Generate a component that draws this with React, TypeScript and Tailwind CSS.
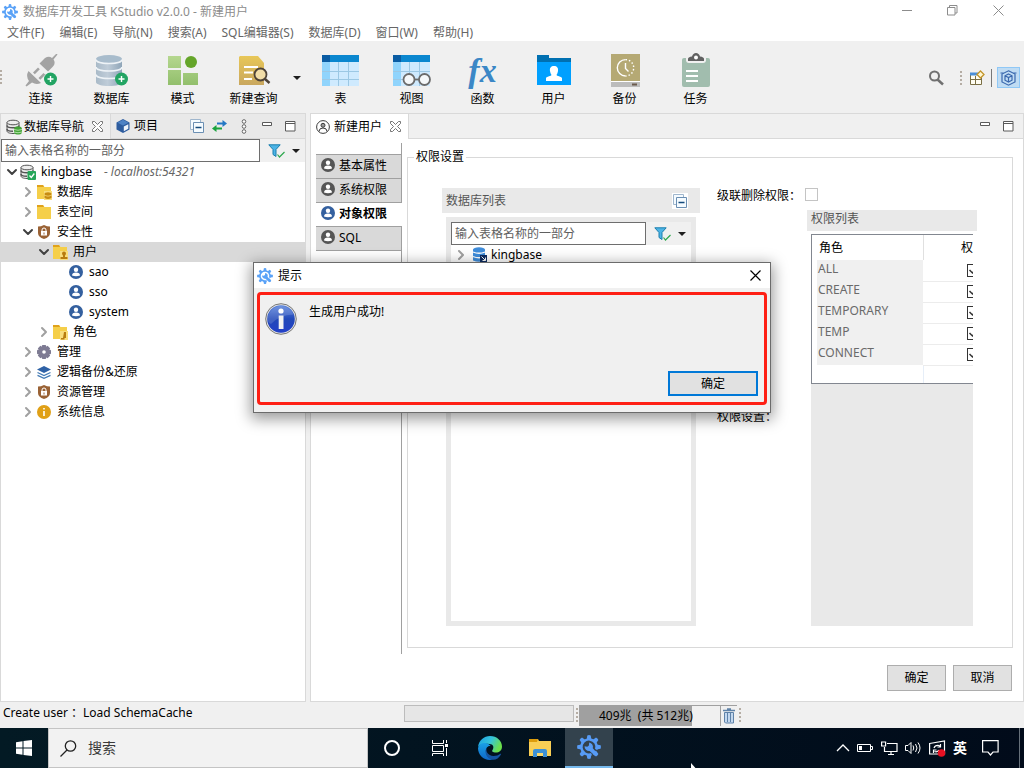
import clsx from "clsx";
import { ChevronDown, ChevronRight } from "lucide-react";
import { ReactNode } from "react";

type IconProps = { size?: number };

const menus = [
    "文件(F)",
    "编辑(E)",
    "导航(N)",
    "搜索(A)",
    "SQL编辑器(S)",
    "数据库(D)",
    "窗口(W)",
    "帮助(H)",
];

const GearIcon = ({ size = 16, color = "#5aa2f7" }: IconProps & { color?: string }) => (
    <svg width={size} height={size} viewBox="0 0 24 24" fill="none">
        {[0, 45, 90, 135, 180, 225, 270, 315].map((deg) => (
            <path
                key={deg}
                d="M9.6 4.6 10.3 0.4Q12 -0.2 13.7 0.4L14.4 4.6Z"
                fill={color}
                transform={`rotate(${deg} 12 12)`}
            />
        ))}
        <path
            d="M14.5 19.2A7.6 7.6 0 1 1 19.2 14.5"
            stroke={color}
            strokeWidth="2.4"
        />
        <path
            d="M12.2 7.4 11.9 10.6 10.3 11.8 7.6 11.2A4.5 4.5 0 0 0 12.6 16L18.3 21 20.6 18.7 15.8 13.2A4.6 4.6 0 0 0 12.2 7.4Z"
            fill={color}
        />
    </svg>
);

const PlusBadge = () => (
    <>
        <circle cx="26.5" cy="25" r="6.5" fill="#22a463" />
        <path d="M26.5 22v6M23.5 25h6" stroke="#fff" strokeWidth="1.4" />
    </>
);

const ConnectIcon = () => (
    <svg width="34" height="34" viewBox="0 0 34 34">
        <g fill="#a3a3a3">
            <path d="M15.5 9.5 21 4Q25 1.5 28 4L32.5-.5 33.5.5 29.5 5.5Q32 9 29 12.5L24 17.5Z" />
            <path d="M4.5 17 17 29Q12 31 8 28.5L2.5 32.5 1.5 31.5 5 27Q1.5 22 4.5 17Z" />
            <path d="m9 18.5 5-5 1.8 1.8-5 5zM14.5 24l5-5 1.8 1.8-5 5z" />
        </g>
        <PlusBadge />
    </svg>
);

const DatabaseIcon = () => (
    <svg width="34" height="34" viewBox="0 0 34 34">
        <defs>
            <linearGradient id="dbBody" x1="0" x2="1">
                <stop offset="0" stopColor="#a9bac8" />
                <stop offset=".45" stopColor="#bfccd8" />
                <stop offset="1" stopColor="#8fa5b8" />
            </linearGradient>
        </defs>
        <path d="M1 5v23c0 2.5 6 4 13 4s13-1.5 13-4V5Z" fill="url(#dbBody)" />
        <ellipse cx="14" cy="5" rx="13" ry="4" fill="#a8bccc" />
        <path
            d="M1 5.5c0 2.5 6 4 13 4s13-1.5 13-4M1 13c0 2.5 6 4 13 4s13-1.5 13-4M1 20.5c0 2.5 6 4 13 4s13-1.5 13-4"
            fill="none"
            stroke="#eef3f7"
            strokeWidth="1.6"
        />
        <PlusBadge />
    </svg>
);

const SchemaIcon = () => (
    <svg width="34" height="34" viewBox="0 0 34 34">
        <defs>
            <linearGradient id="leaf" x1="0" y1="0" x2="0" y2="1">
                <stop offset="0" stopColor="#b5d78f" />
                <stop offset="1" stopColor="#92bf6c" />
            </linearGradient>
        </defs>
        <path d="M2 2h13v12H2zM2 16h13v15H2zM17 19h15v12H17z" fill="url(#leaf)" />
        <circle cx="25" cy="8" r="6" fill="#65a52a" />
    </svg>
);

const QueryIcon = () => (
    <svg width="34" height="34" viewBox="0 0 34 34">
        <defs>
            <linearGradient id="sheet" x1="0" y1="0" x2="0" y2="1">
                <stop offset="0" stopColor="#e8c758" />
                <stop offset="1" stopColor="#c9a75e" />
            </linearGradient>
        </defs>
        <path d="M3 2h18l6 7v22H2V3Z" fill="url(#sheet)" />
        <path d="M7 13h14M7 18.5h9M7 25h8" stroke="#fff" strokeWidth="2" />
        <circle cx="23.5" cy="20.5" r="6" fill="#f1dda8" stroke="#4e4338" strokeWidth="1.8" />
        <path d="m28 25 4.5 4" stroke="#4e4338" strokeWidth="2.4" />
    </svg>
);

const TableGrid = () => (
    <>
        <path d="M-1 1h37v31H-1z" fill="#cfeafe" />
        <path d="M-1 1h8v31h-8z" fill="#90d4fc" />
        <path d="M7 1h29v7H7z" fill="#0b87cf" />
        <path d="M-1 1h8v7h-8z" fill="#0a5ca3" />
        <path d="M-1 17.5h37M-1 25.5h37M15.5 8v24M25.5 8v24" stroke="#9cc8e4" />
    </>
);

const TableIcon = () => (
    <svg width="38" height="34" viewBox="-1 0 38 34">
        <TableGrid />
    </svg>
);

const ViewIcon = () => (
    <svg width="38" height="34" viewBox="-1 0 38 34">
        <TableGrid />
        <g fill="#f5f8fa" stroke="#6c6c6c" strokeWidth="1.8">
            <path d="M20 25.5h6" />
            <circle cx="15" cy="25.5" r="5.5" />
            <circle cx="30.5" cy="25.5" r="5.5" />
        </g>
    </svg>
);

const FunctionIcon = () => (
    <span className="h-[34px] font-['Liberation_Serif',serif] text-[34px] leading-[34px] font-bold text-[#3b87c6] italic">
        fx
    </span>
);

const UserFolderIcon = () => (
    <svg width="34" height="34" viewBox="0 0 34 34">
        <path d="M0 1h12v3h22v5H0z" fill="#0070b1" />
        <path d="M0 8h34v23H0z" fill="#00a0ff" />
        <path
            d="M17 12c3 0 4.5 2 4 5-.3 2-1 3-1.5 4 0 1 5 1.5 5.5 3v3H9v-3c.5-1.5 5.5-2 5.5-3-.5-1-1.2-2-1.5-4-.5-3 1-5 4-5Z"
            fill="#fff"
        />
    </svg>
);

const BackupIcon = () => (
    <svg width="34" height="34" viewBox="0 0 34 34">
        <path d="M3 0h29v33H3z" fill="#b5a974" />
        <path d="M3 27h29v1H3z" fill="#fff" />
        <path d="M3 28h29v5H3z" fill="#bcbcbc" />
        <path d="M24 29.5h5v2h-5z" fill="#6b5a4c" />
        <path d="M17.5 22a8.2 8.2 0 1 1 0-16.4" fill="none" stroke="#fff" strokeWidth="1.4" />
        <path
            d="M17.5 5.6a8.2 8.2 0 0 1 0 16.4"
            fill="none"
            stroke="#fff"
            strokeWidth="1.4"
            strokeDasharray="1.5 2"
        />
        <path d="M17.5 9v5.5l3 3" fill="none" stroke="#fff" strokeWidth="1.4" />
    </svg>
);

const TaskIcon = () => (
    <svg width="34" height="34" viewBox="0 0 34 34" className="overflow-visible">
        <rect x="3" y="4" width="28" height="29" rx="2" fill="#a1bdae" />
        <path d="M7 3h20v3q0 3-3 3H10Q7 9 7 6Z" fill="#f0f0f0" />
        <path d="M9 7V5q0-2 4-2.5Q14-1 17-1t4 3.5Q25 3 25 5v2Z" fill="#616161" />
        <circle cx="17" cy="3.5" r="2" fill="#fff" />
        <path d="M7 17h12M7 22h12M7 27h12" stroke="#fff" strokeWidth="2" />
    </svg>
);

const SmallDbIcon = ({ badge }: { badge: "disk" | "check" }) => (
    <svg width="16" height="16" viewBox="0 0 16 16">
        <path d="M1 3.5v8.5c0 1.5 2.5 2.5 6 2.5s6-1 6-2.5V3.5" fill="#e9e9e9" stroke="#555" />
        <ellipse cx="7" cy="3.5" rx="6" ry="2.3" fill="#eee" stroke="#555" />
        <path
            d="M1 6.5c0 1.5 2.5 2.3 6 2.3s6-.8 6-2.3M1 10c0 1.5 2.5 2.3 6 2.3"
            fill="none"
            stroke="#555"
            strokeWidth="1.5"
        />
        {badge === "disk" ? (
            <>
                <rect x="8" y="7.5" width="8" height="8" rx="3" fill="#43a336" />
                <path d="M8 10.5q4 1.5 8 0M8 13q4 1.5 8 0" fill="none" stroke="#c8efbf" strokeWidth=".8" />
            </>
        ) : (
            <>
                <rect x="7.5" y="7" width="8.5" height="9" rx="1" fill="#27a65a" />
                <path d="m9.5 11.5 1.8 2 3-4" fill="none" stroke="#fff" strokeWidth="1.3" />
            </>
        )}
    </svg>
);

const CubeIcon = () => (
    <svg width="14" height="14" viewBox="0 0 14 14">
        <path d="M7 0 13.5 3.5v7L7 14 .5 10.5v-7Z" fill="#2d5c9e" />
        <path d="M7 .8 12.5 3.7 7 6.5 1.5 3.7Z" fill="#4d82c4" />
        <path d="M7.8 7.5 12.3 5.2v4.5L7.8 12.2Z" fill="#eef4fb" />
    </svg>
);

const CloseX = () => (
    <svg width="11" height="11" viewBox="0 0 11 11" fill="#fff" stroke="#666" strokeWidth=".9">
        <path d="M.5.5h2l3 3 3-3h2v2l-3 3 3 3v2h-2l-3-3-3 3h-2v-2l3-3-3-3Z" />
    </svg>
);

const CollapseIcon = () => (
    <svg width="14" height="14" viewBox="0 0 14 14" fill="#f5fbff" stroke="#9fb6cd">
        <path d="M.5.5h10v10H.5z" />
        <path d="M3.5 3.5h10v10h-10z" stroke="#6b8fb3" />
        <path d="M5.5 8.5h6" stroke="#134a7c" strokeWidth="1.5" />
    </svg>
);

const FilterIcon = () => (
    <svg width="17" height="14" viewBox="0 0 17 14">
        <path d="M.8.8h11.4L8 5.5v7L5 10.5v-5Z" fill="#4db4e6" stroke="#1a7fae" />
        <path d="m9.5 10.5 2 2.5 5-5" fill="none" stroke="#2fa84f" strokeWidth="1.2" />
    </svg>
);

const Caret = () => (
    <svg width="8" height="4" viewBox="0 0 8 4">
        <path d="M0 0h8L4 4Z" fill="#1e1e1e" />
    </svg>
);

const PaneButtons = () => (
    <span className="flex items-center gap-3">
        <button aria-label="最小化面板" className="pb-1">
            <svg width="12" height="5" viewBox="0 0 12 5" fill="#fff" stroke="#5a5a5a">
                <path d="M1.5.5h9v3h-9z" />
            </svg>
        </button>
        <button aria-label="最大化面板">
            <svg width="11" height="11" viewBox="0 0 11 11" fill="#fff" stroke="#5a5a5a">
                <path d="M.5.5h9.5v9.5H.5zM.5 2.5H10" />
            </svg>
        </button>
    </span>
);

const FolderIcon = ({ badge }: { badge?: "db" | "user" | "role" }) => (
    <svg width="16" height="16" viewBox="0 0 16 16">
        <path d="M1 1h6l1.5 2H15v12H1z" fill="#f5cf4a" />
        <path d="M1 1h6l1 2H1z" fill="#e0a21c" />
        {badge && <path d="M8 7h8v9H8z" fill="#f8dd7c" />}
        {badge === "db" && (
            <g fill="#c88c12">
                <ellipse cx="12" cy="10" rx="3.5" ry="1.7" />
                <path d="M8.5 11.5q3.5 1.8 7 0v2.5q-3.5 2-7 0Z" />
            </g>
        )}
        {badge === "user" && (
            <g fill="#b87c10">
                <circle cx="12" cy="9.5" r="2" />
                <path d="M11 11h2v2h2.5v2h-7v-2H11Z" />
            </g>
        )}
        {badge === "role" && (
            <path d="M12 8h2v6h-1.5v1.5H9V14h2Z" fill="#b87c10" />
        )}
    </svg>
);

const ShieldIcon = () => (
    <svg width="14" height="14" viewBox="0 0 14 14">
        <path d="M7 0q3 1.5 6 1.5V8q0 4-6 6-6-2-6-6V1.5Q4 1.5 7 0Z" fill="#9a6235" />
        <path d="M5 6.5V5a2 2 0 0 1 4 0v1.5" fill="none" stroke="#fff" />
        <path d="M4 6h6v4.5H4z" fill="#fff" />
        <path d="M6.5 7.5h1v2h-1z" fill="#9a6235" />
    </svg>
);

const PersonIcon = ({ color = "#34609f" }: { color?: string }) => (
    <svg width="14" height="14" viewBox="0 0 14 14">
        <circle cx="7" cy="7" r="7" fill={color} />
        <circle cx="7" cy="4.7" r="2.2" fill="#fff" />
        <path d="M3 10.5q0-3 4-3t4 3q-4 1.5-8 0Z" fill="#fff" />
    </svg>
);

const PersonOutline = () => (
    <svg width="14" height="14" viewBox="0 0 14 14" fill="none" stroke="#3d3d3d">
        <circle cx="7" cy="7" r="6.4" />
        <circle cx="7" cy="5.3" r="2" fill="#9b9b9b" />
        <path d="M3 11.5q0-3.5 4-3.5t4 3.5" />
    </svg>
);

const CogIcon = () => (
    <svg width="14" height="14" viewBox="0 0 14 14" fill="#7e7b93">
        {[0, 45, 90, 135].map((deg) => (
            <rect key={deg} x="4.8" y="0" width="4.4" height="14" rx="1" transform={`rotate(${deg} 7 7)`} />
        ))}
        <circle cx="7" cy="7" r="5.5" />
        <circle cx="7" cy="7" r="1.8" fill="#fff" />
    </svg>
);

const LayersIcon = () => (
    <svg width="14" height="13" viewBox="0 0 14 13">
        <path d="M7 0 14 3.5 7 7 0 3.5Z" fill="#2f62a6" />
        <path d="m.5 6.5 6.5 3 6.5-3M.5 9.3l6.5 3 6.5-3" fill="none" stroke="#447bb5" strokeWidth="1.3" />
    </svg>
);

const InfoDot = () => (
    <svg width="14" height="14" viewBox="0 0 14 14">
        <circle cx="7" cy="7" r="7" fill="#e0a016" />
        <path d="M6.2 3h1.6v1.6H6.2zM6.2 6h1.6v5H6.2z" fill="#fff" />
    </svg>
);

const BlueDbIcon = () => (
    <svg width="16" height="16" viewBox="0 0 16 16">
        <path d="M1 2.5v11q6 2.5 12 0v-11Z" fill="#3f8ddb" />
        <ellipse cx="7" cy="2.5" rx="6" ry="2.2" fill="#3f8ddb" />
        <path d="M1 5q6 2.5 12 0M1 9.5q6 2.5 12 0" fill="none" stroke="#fff" strokeWidth="1.3" />
        <path d="M8 8h7v7H8z" fill="#0d2d63" />
        <path d="m9.5 9.5 4 4m0-3v3h-3" fill="none" stroke="#fff" />
    </svg>
);

const Grip = () => (
    <svg width="3" height="16" viewBox="0 0 3 16" fill="#b5ada4">
        <path d="M0 1h2v2H0zM0 5h2v2H0zM0 9h2v2H0zM0 13h2v2H0z" />
    </svg>
);

const tools = [
    { label: "连接", icon: <ConnectIcon /> },
    { label: "数据库", icon: <DatabaseIcon /> },
    { label: "模式", icon: <SchemaIcon /> },
    { label: "新建查询", icon: <QueryIcon />, caret: true },
    { label: "表", icon: <TableIcon /> },
    { label: "视图", icon: <ViewIcon /> },
    { label: "函数", icon: <FunctionIcon /> },
    { label: "用户", icon: <UserFolderIcon /> },
    { label: "备份", icon: <BackupIcon /> },
    { label: "任务", icon: <TaskIcon /> },
];

type TreeItem = {
    label: string;
    note?: string;
    pad: string;
    icon: ReactNode;
    state?: "open" | "closed";
    selected?: boolean;
};

const tree: TreeItem[] = [
    { label: "kingbase", note: "- localhost:54321", pad: "pl-[3px]", icon: <SmallDbIcon badge="check" />, state: "open" },
    { label: "数据库", pad: "pl-[19px]", icon: <FolderIcon badge="db" />, state: "closed" },
    { label: "表空间", pad: "pl-[19px]", icon: <FolderIcon />, state: "closed" },
    { label: "安全性", pad: "pl-[19px]", icon: <ShieldIcon />, state: "open" },
    { label: "用户", pad: "pl-[35px]", icon: <FolderIcon badge="user" />, state: "open", selected: true },
    { label: "sao", pad: "pl-[51px]", icon: <PersonIcon /> },
    { label: "sso", pad: "pl-[51px]", icon: <PersonIcon /> },
    { label: "system", pad: "pl-[51px]", icon: <PersonIcon /> },
    { label: "角色", pad: "pl-[35px]", icon: <FolderIcon badge="role" />, state: "closed" },
    { label: "管理", pad: "pl-[19px]", icon: <CogIcon />, state: "closed" },
    { label: "逻辑备份&还原", pad: "pl-[19px]", icon: <LayersIcon />, state: "closed" },
    { label: "资源管理", pad: "pl-[19px]", icon: <ShieldIcon />, state: "closed" },
    { label: "系统信息", pad: "pl-[19px]", icon: <InfoDot />, state: "closed" },
];

const sections = ["基本属性", "系统权限", "对象权限", "SQL"];

const roles = ["ALL", "CREATE", "TEMPORARY", "TEMP", "CONNECT"];

export default function App() {
    return (
        <div className="relative flex h-screen flex-col overflow-hidden bg-[#f0f0f0] font-['Noto_Sans','Noto_Sans_CJK_SC',sans-serif] text-xs leading-4 text-black">
            <TitleBar />
            <nav className="flex h-[17px] shrink-0 items-center gap-[15px] bg-white pl-[7px] text-[#666]">
                {menus.map((menu) => (
                    <button key={menu}>{menu}</button>
                ))}
            </nav>
            <Toolbar />
            <main className="flex min-h-0 flex-1 gap-1">
                <Navigator />
                <Editor />
            </main>
            <StatusBar />
            <TaskBar />
            <MessageDialog />
            <svg className="absolute top-[763px] left-[691px]" width="10" height="14" viewBox="0 0 10 14">
                <path d="M0 0v12l3-3h5Z" fill="#fff" />
            </svg>
        </div>
    );
}

const TitleBar = () => (
    <header className="flex h-6 shrink-0 items-center gap-1 bg-white pl-[2px] text-[#8c8c8c]">
        <GearIcon />
        <h1 className="flex-1 pl-px">数据库开发工具 KStudio v2.0.0 - 新建用户</h1>
        <div className="flex items-center gap-[35px] pr-5 pb-1">
            <button aria-label="最小化">
                <svg width="10" height="11" viewBox="0 0 10 11" stroke="#8c8c8c">
                    <path d="M0 5.5h10" />
                </svg>
            </button>
            <button aria-label="还原">
                <svg width="11" height="11" viewBox="0 0 11 11" fill="none" stroke="#8c8c8c">
                    <path d="M.5 2.5h7.5V10H.5zM2.5 2.5v-2H10V8H8" />
                </svg>
            </button>
            <button aria-label="关闭">
                <svg width="11" height="11" viewBox="0 0 11 11" stroke="#8c8c8c">
                    <path d="m.5.5 10 10M10.5.5l-10 10" />
                </svg>
            </button>
        </div>
    </header>
);

const Toolbar = () => (
    <div className="flex h-[72px] shrink-0 items-center">
        <span className="w-[5px]">
            <Grip />
        </span>
        {tools.map((tool) => (
            <div key={tool.label} className="flex items-center">
                <button className="flex w-[71px] flex-col items-center gap-[3px] pt-[6px]">
                    {tool.icon}
                    <span>{tool.label}</span>
                </button>
                {tool.caret && (
                    <button aria-label="更多查询" className="flex w-4 justify-center pt-[2px]">
                        <Caret />
                    </button>
                )}
            </div>
        ))}
        <div className="ml-auto flex items-center pt-px pr-1">
            <button aria-label="搜索" className="mr-4">
                <svg width="16" height="16" viewBox="0 0 16 16" fill="none" stroke="#707070">
                    <circle cx="6.5" cy="6" r="4.5" strokeWidth="2" />
                    <path d="m9.5 9.5 5.5 5" strokeWidth="2.5" />
                </svg>
            </button>
            <Grip />
            <button aria-label="打开透视图" className="mx-[6px]">
                <svg width="16" height="16" viewBox="0 0 16 16" fill="none">
                    <path d="M1.5 3.5h11v11h-11z" fill="#fffdf2" stroke="#7a6f45" />
                    <path d="M1 2.5h10v3H1z" fill="#4b8fd8" />
                    <path d="M6.5 6v8M2 9.5h10" stroke="#7a6f45" />
                    <path d="M11.5 1 15 4.5 11.5 8 8 4.5Z" fill="#fff7d2" stroke="#c2952b" strokeWidth="1.3" />
                </svg>
            </button>
            <span className="mr-[5px] h-[18px] w-px bg-[#777]" />
            <button
                aria-label="数据库透视图"
                className="flex h-[21px] w-[23px] items-center justify-center border border-[#90c8f6] bg-[#c0dcf3]"
            >
                <svg width="17" height="16" viewBox="0 0 17 16" fill="none" stroke="#3a68ae" strokeWidth="1.2">
                    <path d="M8.5.8 15 4v8l-6.5 3.2L2 12V4Z" />
                    <path d="M8.5 4 12 5.8v4.4L8.5 12 5 10.2V5.8ZM5 5.8l3.5 1.8L12 5.8M8.5 7.6V12M.5 3h3M13.5 3h3" />
                </svg>
            </button>
        </div>
    </div>
);

const FilterRow = ({ id }: { id: string }) => (
    <div className="flex h-[23px] shrink-0 items-center bg-[#f0f0f0]">
        <input
            id={id}
            aria-label="输入表格名称的一部分"
            placeholder="输入表格名称的一部分"
            className="h-[23px] min-w-0 flex-1 border border-[#6e6e6e] bg-white px-[3px] placeholder:text-[#606060]"
        />
        <button aria-label="过滤" className="ml-2">
            <FilterIcon />
        </button>
        <button aria-label="过滤选项" className="mr-[5px] ml-[7px]">
            <Caret />
        </button>
    </div>
);

const Navigator = () => (
    <aside className="flex w-[306px] shrink-0 flex-col border border-[#d9d9d9] bg-white">
        <div className="flex h-[25px] shrink-0 items-stretch bg-[#f0f0f0]">
            <button className="flex items-center gap-[2px] border-r border-[#d9d9d9] pr-[7px] pl-[5px]">
                <SmallDbIcon badge="disk" />
                <span className="pr-[6px]">数据库导航</span>
                <CloseX />
            </button>
            <div className="flex flex-1 items-center border-b border-[#d9d9d9] bg-[#e9e9e9] pl-[5px]">
                <button className="flex items-center gap-1">
                    <CubeIcon />
                    项目
                </button>
                <div className="ml-auto flex items-center gap-2 pr-[9px]">
                    <button aria-label="全部折叠">
                        <CollapseIcon />
                    </button>
                    <button aria-label="与编辑器同步">
                        <svg width="15" height="12" viewBox="0 0 15 12" strokeWidth="2" fill="none">
                            <path d="M5 3.5h6" stroke="#2478c4" />
                            <path d="M10.5 0 15 3.5 10.5 7Z" fill="#2478c4" />
                            <path d="M4 8.5h6" stroke="#19a33c" />
                            <path d="M4.5 5 0 8.5 4.5 12Z" fill="#19a33c" />
                        </svg>
                    </button>
                    <button aria-label="视图菜单" className="mx-[6px]">
                        <svg width="6" height="15" viewBox="0 0 6 15" fill="#fff" stroke="#666">
                            <circle cx="3" cy="2.5" r="1.8" />
                            <circle cx="3" cy="7.5" r="1.8" />
                            <circle cx="3" cy="12.5" r="1.8" />
                        </svg>
                    </button>
                    <PaneButtons />
                </div>
            </div>
        </div>
        <FilterRow id="nav-filter" />
        <ul>
            {tree.map((item) => (
                <li
                    key={item.label}
                    className={clsx("flex h-5 items-center", item.pad, item.selected && "bg-[#d9d9d9]")}
                >
                    <span className="w-4">
                        {item.state === "open" && <ChevronDown size={16} strokeWidth={3} color="#404040" />}
                        {item.state === "closed" && <ChevronRight size={16} strokeWidth={3} color="#a0a0a0" />}
                    </span>
                    <span className="mr-[5px] flex w-4 justify-center">{item.icon}</span>
                    <span className="whitespace-nowrap">{item.label}</span>
                    {item.note && <em className="pl-3 text-[#666]">{item.note}</em>}
                </li>
            ))}
        </ul>
    </aside>
);

const Editor = () => (
    <section className="flex min-w-0 flex-1 flex-col border border-[#d9d9d9] bg-white">
        <div className="flex h-[25px] shrink-0">
            <button className="flex items-center gap-1 border-r border-[#d9d9d9] pr-[7px] pl-[5px]">
                <PersonOutline />
                <span className="pr-1">新建用户</span>
                <CloseX />
            </button>
            <div className="flex flex-1 items-center justify-end border-b border-[#d9d9d9] bg-[#f0f0f0] pr-[9px]">
                <PaneButtons />
            </div>
        </div>
        <div className="flex min-h-0 flex-1 pl-[5px]">
            <div className="mt-1 mb-[47px] flex w-[86px] shrink-0 flex-col">
                <span className="h-[11px] border-r border-[#a0a0a0]" />
                {sections.map((section) => (
                    <button
                        key={section}
                        className={clsx(
                            "flex h-6 items-center gap-1 border-t border-[#a0a0a0] pb-[2px] pl-[5px]",
                            section === "对象权限" ? "bg-white font-bold" : "border-r bg-[#d9d9d9]",
                        )}
                    >
                        <span className="pb-[2px]">
                            <PersonIcon color={section === "对象权限" ? "#34609f" : "#555"} />
                        </span>
                        {section}
                    </button>
                ))}
                <span className="flex-1 border-t border-r border-[#a0a0a0]" />
            </div>
            <div className="flex min-w-0 flex-1 flex-col pt-[10px] pr-[10px] pb-[10px] pl-[5px]">
                <fieldset className="min-h-0 flex-1 border border-[#d9d9d9] pl-[34px]">
                    <legend className="-ml-[28px] px-[2px]">权限设置</legend>
                    <div className="flex h-full items-stretch pt-[23px] pb-[21px]">
                        <DatabaseList />
                        <Privileges />
                    </div>
                </fieldset>
                <div className="flex justify-end gap-[7px] pt-[17px] pr-px">
                    {["确定", "取消"].map((label) => (
                        <button key={label} className="h-[26px] w-[59px] border border-[#adadad] bg-[#e1e1e1]">
                            {label}
                        </button>
                    ))}
                </div>
            </div>
        </div>
    </section>
);

const DatabaseList = () => (
    <div className="flex w-[258px] shrink-0 flex-col gap-1">
        <div className="flex h-[25px] shrink-0 items-center justify-between bg-[#e9e9e9] pr-3 pl-1 text-[#555]">
            数据库列表
            <button aria-label="全部折叠" className="bg-white p-px">
                <CollapseIcon />
            </button>
        </div>
        <div className="mr-1 ml-1 flex min-h-0 flex-1 flex-col border-[5px] border-[#e9e9e9] bg-white">
            <FilterRow id="db-filter" />
            <div className="flex h-5 items-center pl-[2px]">
                <ChevronRight size={16} strokeWidth={3} color="#a0a0a0" />
                <span className="flex w-[22px] justify-center">
                    <BlueDbIcon />
                </span>
                kingbase
            </div>
        </div>
    </div>
);

const Privileges = () => (
    <div className="ml-[17px] flex flex-1">
        <div className="flex w-[88px] shrink-0 flex-col justify-between">
            <label htmlFor="cascade" className="whitespace-nowrap">
                级联删除权限：
            </label>
            <span className="mb-[201px] whitespace-nowrap">权限设置：</span>
        </div>
        <div className="flex w-[172px] flex-col">
            <input
                id="cascade"
                type="checkbox"
                className="size-[13px] shrink-0 appearance-none border border-[#c4c4c4] bg-white"
            />
            <h2 className="mt-[9px] ml-[2px] h-[21px] shrink-0 bg-[#e9e9e9] pt-px pl-1 text-[#555]">权限列表</h2>
            <div className="mt-[3px] mr-1 ml-[6px] flex flex-1 flex-col overflow-hidden bg-[#e9e9e9]">
                <div className="h-[150px] overflow-hidden border border-r-0 border-[#828790] bg-white">
                    <table className="w-full table-fixed border-collapse">
                        <thead>
                            <tr className="h-[25px]">
                                <th className="w-[111px] border-r border-[#e0e0e0] pl-[7px] text-left font-normal">
                                    角色
                                </th>
                                <th className="pr-0 text-right font-normal">权</th>
                            </tr>
                        </thead>
                        <tbody>
                            {roles.map((role) => (
                                <tr key={role} className="h-[21px]">
                                    <td className="p-0 pl-[5px]">
                                        <div className="h-[21px] bg-[#f0f0f0] pt-px pl-px text-[#6a6a6a]">{role}</div>
                                    </td>
                                    <td className="border-b border-[#ececec] p-0">
                                        <div className="flex h-5 items-center overflow-hidden pl-11">
                                            <PrivilegeCheck role={role} />
                                        </div>
                                    </td>
                                </tr>
                            ))}
                            <tr className="h-[18px]">
                                <td className="border-r border-[#e6eef8]" />
                                <td />
                            </tr>
                        </tbody>
                    </table>
                </div>
            </div>
        </div>
    </div>
);

const PrivilegeCheck = ({ role }: { role: string }) => (
    <span className="relative size-[13px] shrink-0">
        <input
            type="checkbox"
            aria-label={role}
            defaultChecked
            className="block size-[13px] appearance-none border border-[#333] bg-white"
        />
        <svg className="pointer-events-none absolute inset-0" width="13" height="13" viewBox="0 0 13 13">
            <path d="m2.5 6 3 3 5-5.5" fill="none" stroke="#333" strokeWidth="1.5" />
        </svg>
    </span>
);

const StatusBar = () => (
    <footer className="flex h-[26px] shrink-0 items-center">
        <span className="w-[404px] pb-1 pl-[3px]">Create user ：Load SchemaCache</span>
        <span className="mb-1 h-[17px] w-[170px] border border-[#bcbcbc] bg-[#e6e6e6]" />
        <span className="ml-[2px] w-[3px]">
            <Grip />
        </span>
        <span className="flex h-[21px] w-[142px] items-center border-t border-r border-[#a0a0a0] bg-[linear-gradient(90deg,#a0a0a0_80%,#f0f0f0_80%)] pl-5 whitespace-pre">
            409兆  (共 512兆)
        </span>
        <button
            aria-label="运行垃圾回收"
            className="mr-[2px] flex h-[21px] w-4 items-center justify-center border-t border-[#a0a0a0]"
        >
            <svg width="12" height="16" viewBox="0 0 12 16" fill="none" stroke="#5f82a8">
                <path d="M0 2.5h12M4 1h4" strokeWidth="1.5" />
                <path d="M1.5 4.5h9V15h-8l-1-1Z" fill="#c3d8ef" />
                <path d="M4.5 5v9M7.5 5v9" />
            </svg>
        </button>
        <Grip />
    </footer>
);

const MessageDialog = () => (
    <div
        role="dialog"
        aria-labelledby="dialog-title"
        className="absolute top-[262px] left-1/2 flex h-[151px] w-[518px] -translate-x-1/2 flex-col border border-[#6b6b6b] bg-[#f0f0f0] shadow-[0_4px_14px_2px_rgba(0,0,0,0.4)]"
    >
        <div className="flex h-[25px] shrink-0 items-center bg-white pr-[9px] pl-[3px]">
            <GearIcon />
            <h2 id="dialog-title" className="flex-1 pl-[5px]">
                提示
            </h2>
            <button aria-label="关闭">
                <svg width="11" height="11" viewBox="0 0 11 11" stroke="#000" strokeWidth="1.2">
                    <path d="m.5.5 10 10M10.5.5l-10 10" />
                </svg>
            </button>
        </div>
        <div className="mx-[3px] mt-1 mb-[7px] flex flex-1 flex-col justify-between rounded-[4px] border-[3px] border-[#fe1f14] pr-[6px] pb-[6px] pl-[5px]">
            <div className="flex gap-3 pt-2">
                <svg width="32" height="32" viewBox="0 0 32 32">
                    <defs>
                        <linearGradient id="info" x1="0" y1="0" x2="0" y2="1">
                            <stop offset="0" stopColor="#5b84dc" />
                            <stop offset=".5" stopColor="#2148b8" />
                            <stop offset="1" stopColor="#2340c8" />
                        </linearGradient>
                    </defs>
                    <circle cx="16" cy="16" r="15.3" fill="#e4e4e4" stroke="#777" />
                    <circle cx="16" cy="16" r="13.8" fill="url(#info)" />
                    <path d="M2.5 16a13.5 13.5 0 0 1 26-4.5Q14 12 6 21Q3 20 2.5 16Z" fill="#fff" opacity=".15" />
                    <circle cx="16" cy="8" r="2.6" fill="#fff" />
                    <path d="M13.7 12.5h4.8V26h-4.8z" fill="#f2f2f2" />
                </svg>
                <p className="pt-px">生成用户成功!</p>
            </div>
            <button className="h-[25px] w-[90px] self-end border-2 border-[#0078d7] bg-[#e1e1e1]">确定</button>
        </div>
    </div>
);

const EdgeIcon = () => (
    <svg width="24" height="24" viewBox="0 0 24 24">
        <defs>
            <linearGradient id="edgeTop" x1="0" y1="0" x2="1" y2=".4">
                <stop offset="0" stopColor="#1b9de2" />
                <stop offset=".55" stopColor="#35c4dc" />
                <stop offset="1" stopColor="#6be04c" />
            </linearGradient>
            <linearGradient id="edgeLeft" x1="0" y1="0" x2="0" y2="1">
                <stop offset="0" stopColor="#1aa0e6" />
                <stop offset="1" stopColor="#0e67c8" />
            </linearGradient>
        </defs>
        <path d="M0 11C1 4 6 0 12 0c7 0 12 5 12 10.5 0 4-3 6-6 6-3.5 0-4.5-1.2-3.5-2.5 2-3 .5-6-3-6C6 7 2 8 0 11Z" fill="url(#edgeTop)" />
        <path d="M0 12C1 8 5 6 9 7.5c2 .7 3 1.5 3.5 2.5-3.5-.5-5 3-4.5 6 .6 4 4 7 7 7.5C7 25.5 0 20 0 12Z" fill="url(#edgeLeft)" />
        <path d="M9.5 11c-3 3 .5 9 6 9 3 0 5-1 6.5-2 .8-.5 1.2 0 .8.7C21 22 18 24 14.5 23.7 8.5 23 5 15 9.5 11Z" fill="#1554a0" />
    </svg>
);

const TaskBar = () => (
    <div className="flex h-10 shrink-0 items-stretch bg-linear-to-r from-[#031a24] to-[#010b1a] text-white">
        <button aria-label="开始" className="flex w-12 items-center justify-center">
            <svg width="16" height="16" viewBox="0 0 16 16" fill="#fff">
                <path d="M0 2.2 6.5 1.3v6.2H0zM7.5 1.1 16 0v7.5H7.5zM0 8.5h6.5v6.2L0 13.8zM7.5 8.5H16V16l-8.5-1.1z" />
            </svg>
        </button>
        <label
            htmlFor="search"
            className="flex w-80 items-center gap-[11px] border border-[#c4c4c4] bg-[#f2f2f2] pl-[11px]"
        >
            <svg width="17" height="17" viewBox="0 0 17 17" fill="none" stroke="#222" strokeWidth="1.3">
                <circle cx="10.5" cy="6" r="5.2" />
                <path d="M7 10 .5 16.5" />
            </svg>
            <input
                id="search"
                aria-label="搜索"
                placeholder="搜索"
                className="min-w-0 flex-1 text-sm placeholder:text-[#3a3a3a]"
            />
        </label>
        <button aria-label="Cortana" className="flex w-12 items-center justify-center">
            <span className="size-4 rounded-full border-2 border-white" />
        </button>
        <button aria-label="任务视图" className="flex w-12 items-center justify-center">
            <svg width="17" height="16" viewBox="0 0 17 16" fill="none" stroke="#fff">
                <path d="M.5 0v3.5h11V0M.5 5.5h11v6H.5zM.5 16v-2.5h11V16M14.5 0v3M14.5 8v8" />
                <path d="M13 4h3v3h-3z" fill="#fff" stroke="none" />
            </svg>
        </button>
        <button aria-label="Edge" className="ml-px flex w-[50px] items-center justify-center">
            <EdgeIcon />
        </button>
        <button aria-label="文件资源管理器" className="flex w-[50px] items-center justify-center">
            <svg width="22" height="18" viewBox="0 0 22 18">
                <path d="M0 0h9l1 2h12v15H0z" fill="#f9cf55" />
                <path d="M0 0h9l-1 3H0z" fill="#dd9d0c" />
                <path d="M4 18v-6q0-2 2-2h10q2 0 2 2v6h-4v-4H8v4Z" fill="#3d91d6" />
                <path d="M8 14h6v3H8z" fill="#fbd96c" />
            </svg>
        </button>
        <button
            aria-label="KStudio"
            className="flex w-12 items-center justify-center border-b-2 border-[#76b9ed] bg-[#33424d]"
        >
            <GearIcon size={24} color="#579bf5" />
        </button>
        <div className="ml-auto flex items-center gap-[7px] pr-1">
            <button aria-label="显示隐藏的图标">
                <svg width="14" height="8" viewBox="0 0 14 8" fill="none" stroke="#fff" strokeWidth="1.3">
                    <path d="m1 7 6-6 6 6" />
                </svg>
            </button>
            <svg width="17" height="10" viewBox="0 0 17 10" fill="none" stroke="#fff">
                <path d="M.5 1.5h13v7H.5zM14 3.5h1.5v3H14" />
                <path d="M2 3h3v4H2z" fill="#fff" stroke="none" />
            </svg>
            <svg width="17" height="15" viewBox="0 0 17 15" fill="none" stroke="#fff" strokeWidth="1.2">
                <path d="M6 2.5h10v8H3.5V6M7 13.5h6M10 11v2.5M.6 1h4v4h-4z" />
            </svg>
            <svg width="17" height="14" viewBox="0 0 17 14" fill="none" stroke="#fff">
                <path d="M.5 4.5H3l3-3v11l-3-3H.5zM8 4.5q1.5 2.5 0 5M10.5 3q3 4 0 8M13 1.5q4 5.5 0 11" />
            </svg>
            <svg width="17" height="17" viewBox="0 0 17 17" fill="none" stroke="#fff" strokeWidth="1.2">
                <path d="M.6 3.5 15.5 1v13H.6z" />
                <path d="M5 8q1-3 5-2.5l1.5 1M11.5 4v3h-3M10 10q-1.5 2.5-4.5 1.5M4.5 13v-3h3" />
                <circle cx="12.5" cy="13" r="3.8" fill="#e81123" stroke="none" />
            </svg>
            <button className="text-sm font-bold">英</button>
            <button aria-label="通知" className="mr-4 ml-2">
                <svg width="17" height="16" viewBox="0 0 17 16" fill="none" stroke="#fff" strokeWidth="1.2">
                    <path d="M.6.6h15.5V12H11l-2.5 3L6 12H.6z" />
                </svg>
            </button>
        </div>
        <span className="mr-1 w-px bg-[#66707a]" />
    </div>
);
